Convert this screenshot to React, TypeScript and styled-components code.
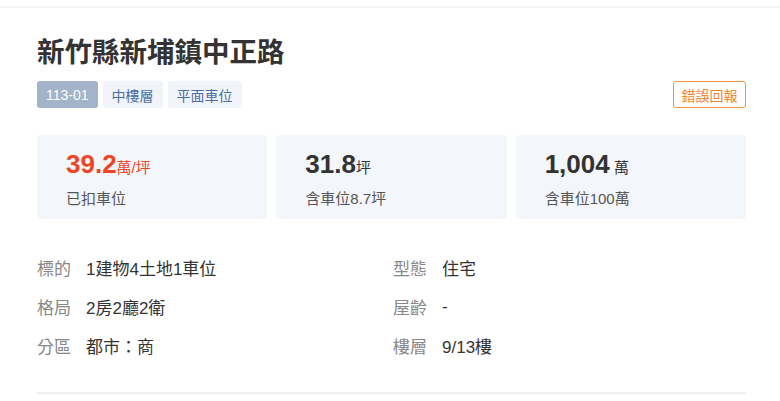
import React from "react";
import styled, { createGlobalStyle } from "styled-components";

const Global = createGlobalStyle`
  html, body { margin: 0; padding: 0; background: #fff; }
  body { font-family: "Liberation Sans", "Noto Sans CJK TC", sans-serif; color: #333; }
`;

const Page = styled.div`
  width: 780px;
`;

const TopRule = styled.div`
  margin-top: 6px;
  height: 2px;
  background: #f5f5f5;
`;

const Content = styled.div`
  padding: 0 34px 0 37px;
`;

const Title = styled.h1`
  margin: 27px 0 0;
  font-size: 27.5px;
  line-height: 36px;
  font-weight: 700;
  color: #333;
`;

const TagRow = styled.div`
  margin-top: 10px;
  display: flex;
  align-items: center;
  gap: 5px;
`;

const Tag = styled.span<{ $dark?: boolean }>`
  display: inline-flex;
  align-items: center;
  justify-content: center;
  height: 27px;
  min-width: 60px;
  padding: 0 9px;
  box-sizing: border-box;
  border-radius: 3px;
  font-size: 14px;
  background: ${(p) => (p.$dark ? "#a3b3c9" : "#f1f4fa")};
  color: ${(p) => (p.$dark ? "#fff" : "#4b6ea3")};
`;

const ReportButton = styled.button`
  margin-left: auto;
  height: 27px;
  width: 73px;
  padding: 0;
  border: 1px solid #f3913f;
  border-radius: 3px;
  background: #fff;
  color: #ef8633;
  font-family: inherit;
  font-size: 14px;
`;

const Cards = styled.div`
  margin-top: 27px;
  display: grid;
  grid-template-columns: repeat(3, 1fr);
  gap: 9px;
`;

const Card = styled.div`
  background: #f3f6fa;
  border-radius: 4px;
  padding: 14px 0 13px 29px;
  height: 84px;
  box-sizing: border-box;
  display: flex;
  flex-direction: column;
`;

const Figure = styled.div<{ $accent?: boolean }>`
  line-height: 30px;
  color: ${(p) => (p.$accent ? "#ee4527" : "#333")};
`;

const Num = styled.span`
  font-size: 26px;
  font-weight: 700;
`;

const Unit = styled.span`
  font-size: 15px;
`;

const Sub = styled.div`
  margin-top: 5px;
  font-size: 15px;
  line-height: 22px;
  color: #555;
`;

const Info = styled.div`
  margin-top: 29px;
  display: grid;
  grid-template-columns: 356px 1fr;
`;

const InfoRow = styled.div`
  display: flex;
  align-items: center;
  height: 39px;
  font-size: 17px;
`;

const Label = styled.span`
  color: #888;
  width: 49px;
  flex: none;
`;

const Value = styled.span`
  color: #333;
`;

const BottomRule = styled.div`
  margin-top: 27px;
  height: 2px;
  background: #efefef;
`;

const info: [string, string][] = [
  ["標的", "1建物4土地1車位"],
  ["型態", "住宅"],
  ["格局", "2房2廳2衛"],
  ["屋齡", "-"],
  ["分區", "都市：商"],
  ["樓層", "9/13樓"],
];

export default function App() {
  return (
    <Page>
      <Global />
      <TopRule />
      <Content>
        <Title>新竹縣新埔鎮中正路</Title>
        <TagRow>
          <Tag $dark>113-01</Tag>
          <Tag>中樓層</Tag>
          <Tag>平面車位</Tag>
          <ReportButton>錯誤回報</ReportButton>
        </TagRow>
        <Cards>
          <Card>
            <Figure $accent>
              <Num>39.2</Num>
              <Unit>萬/坪</Unit>
            </Figure>
            <Sub>已扣車位</Sub>
          </Card>
          <Card>
            <Figure>
              <Num>31.8</Num>
              <Unit>坪</Unit>
            </Figure>
            <Sub>含車位8.7坪</Sub>
          </Card>
          <Card>
            <Figure>
              <Num>1,004</Num>
              <Unit> 萬</Unit>
            </Figure>
            <Sub>含車位100萬</Sub>
          </Card>
        </Cards>
        <Info>
          {info.map(([l, v]) => (
            <InfoRow key={l}>
              <Label>{l}</Label>
              <Value>{v}</Value>
            </InfoRow>
          ))}
        </Info>
        <BottomRule />
      </Content>
    </Page>
  );
}
